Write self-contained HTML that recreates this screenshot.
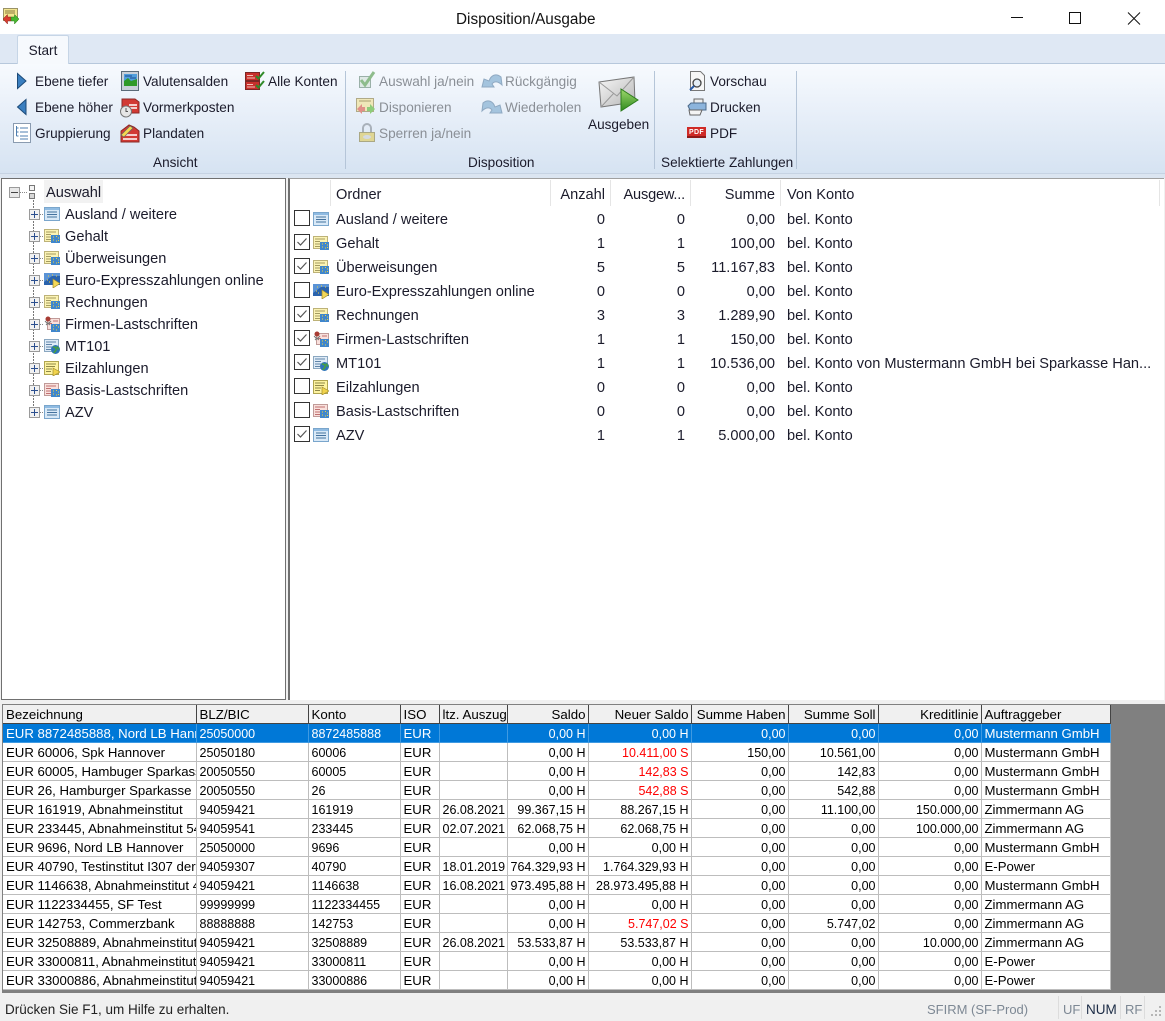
<!DOCTYPE html>
<html lang="de"><head><meta charset="utf-8"><title>Disposition/Ausgabe</title>
<style>
html,body{margin:0;padding:0;background:#fff}
#w{position:relative;width:1165px;height:1021px;overflow:hidden;background:#f0f0f0;font:13.6px "Liberation Sans",sans-serif;color:#1b1b2b}
.a{position:absolute;white-space:nowrap}
.t{position:absolute;white-space:nowrap;line-height:18px;height:18px;margin-top:1px}
.d{color:#8a8f96}
svg.i{position:absolute;overflow:visible}
.r{text-align:right}
.big{font-size:14.6px}
table{position:absolute;left:3px;top:705px;width:1107px;border-collapse:collapse;table-layout:fixed;font:13.2px "Liberation Sans",sans-serif;color:#000;background:#fff}
td,th{height:16px;padding:2px 2px 0 3px;border-right:1px solid #bdbdbd;border-bottom:1px solid #bdbdbd;overflow:hidden;white-space:nowrap;line-height:16px;font-weight:normal;box-sizing:content-box}
td:nth-child(2),td:nth-child(3),td.n,td.c{font-size:12.5px}
th{background:#f0f0f0;border-right:1px solid #444;border-bottom:1px solid #444;text-align:left;font-size:13.3px}
th.n,td.n{text-align:right}
tr.s td{background:#0078d7;color:#fff;border-color:#3f9ae2}
.red{color:#f00}
</style></head><body><div id="w">
<svg width="0" height="0" style="position:absolute"><defs>
<symbol id="blue" viewBox="0 0 16 16"><rect x=".5" y="1.500" width="15" height="13" fill="#d9e9f7" stroke="#7aa6cc"/><rect x="1" y="2" width="14" height="2" fill="#8fbbe2"/><path d="M3 6h10M3 8.500h10M3 11h10" stroke="#44729e"/></symbol>
<symbol id="yel" viewBox="0 0 16 16"><rect x=".5" y="1.500" width="14" height="12" fill="#fbf3b4" stroke="#bdb278"/><path d="M2 4h10M2 6.500h5M2 9h5M2 11.500h5" stroke="#a49b60"/><rect x="7" y="7" width="9" height="8" fill="#3f86cc"/><path d="M9 9h1M12 8.500h1M14 10h1M9 12h1M12 13h1M14 12.500h1" stroke="#f2d23c"/></symbol>
<symbol id="pink" viewBox="0 0 16 16"><rect x=".5" y="1.500" width="14" height="12" fill="#f9e0dc" stroke="#c09a98"/><path d="M2 4h10M2 6.500h5M2 9h5M2 11.500h5" stroke="#c07070"/><rect x="7" y="7" width="9" height="8" fill="#3f86cc"/><path d="M9 9h1M12 8.500h1M14 10h1M9 12h1M12 13h1M14 12.500h1" stroke="#f2d23c"/></symbol>
<symbol id="firm" viewBox="0 0 16 16"><rect x="3.500" y="2.500" width="12" height="11" fill="#f9e0dc" stroke="#c09a98"/><path d="M9 5h5M4 7.500h4" stroke="#c07070"/><circle cx="4" cy="3" r="2.500" fill="#a83c34"/><path d="M1 5l3 3 3-3M2 9l2-2 2 2" stroke="#777" fill="none"/><rect x="7" y="8" width="9" height="8" fill="#3f86cc"/><path d="M9 10h1M12 9.500h1M14 11h1M9 13h1M12 14h1" stroke="#f2d23c"/></symbol>
<symbol id="euro" viewBox="0 0 16 16"><rect x="0" y="1" width="16" height="12" fill="#2a63ad"/><path d="M0 1h16v3H8L0 10z" fill="#5a93d6"/><path d="M4 4h1M8 3h1M12 4h1M3 8h1M5 10h1" stroke="#f2d23c"/><path d="M9 7l7 4.500-7 4.500z" fill="#f3d85a" stroke="#a28c2c" stroke-width=".7"/></symbol>
<symbol id="mt" viewBox="0 0 16 16"><rect x=".5" y="1.500" width="14" height="12" fill="#dfebf7" stroke="#8aa7c0"/><path d="M2 4h10M2 6.500h6M2 9h6M2 11.500h5" stroke="#5f84a8"/><circle cx="11.500" cy="11.500" r="4.500" fill="#2f75b8"/><path d="M9 9c2 0 4 1 3 3s-2 2-2 3M13 8.500l2 3" stroke="#46a23c" stroke-width="1.500" fill="none"/></symbol>
<symbol id="eil" viewBox="0 0 16 16"><rect x=".5" y="1.500" width="14" height="13" fill="#fdf3a0" stroke="#b0a550"/><path d="M2 4h10M2 6.500h9M2 9h6M2 11.500h5" stroke="#8f8848"/><path d="M9 8l7 4-7 4z" fill="#f1d34c" stroke="#a28c2c" stroke-width=".7"/></symbol>
<symbol id="plus" viewBox="0 0 11 11"><rect x=".5" y=".5" width="10" height="10" fill="#f1f1f1" stroke="#9a9a9a"/><path d="M2 5.500h7M5.500 2v7" stroke="#2b4f8f"/></symbol>
<symbol id="chk" viewBox="0 0 17 17"><rect x=".5" y=".5" width="15" height="15" fill="#fff" stroke="#333"/><path d="M3.500 8l3 3 6-6.500" fill="none" stroke="#555" stroke-width="1.200"/></symbol>
<symbol id="unc" viewBox="0 0 17 17"><rect x=".5" y=".5" width="15" height="15" fill="#fff" stroke="#333"/></symbol>
<linearGradient id="gg" x1="0" x2="0" y1="0" y2="1"><stop offset="0" stop-color="#9ed86c"/><stop offset="1" stop-color="#2f8a1e"/></linearGradient>
<linearGradient id="env" x1="0" x2="1" y1="0" y2="1"><stop offset="0" stop-color="#f7f7f7"/><stop offset="1" stop-color="#b5b5b5"/></linearGradient>
</defs></svg>

<!-- title bar -->
<div class="a" style="left:0;top:0;width:1165px;height:34px;background:#fff"></div>
<svg class="i" style="left:3px;top:8px" width="16" height="16" viewBox="0 0 16 16"><rect x=".5" y=".5" width="14" height="12" fill="#f3e690" stroke="#9a9266"/><path d="M2 3h10M2 5h10" stroke="#8a7a40"/><path d="M0 11l4.500-4.500V9H8v4H4.500v3z" fill="#d83c30" stroke="#8a2018" stroke-width=".5"/><path d="M16 11l-4.500-4.500V9H8v4h3.500v3z" fill="#48b830" stroke="#2a7a18" stroke-width=".5"/></svg>
<div class="a" style="left:456px;top:11px;line-height:18px;font-size:15.3px;color:#111">Disposition/Ausgabe</div>
<svg class="i" style="left:1000px;top:0" width="165" height="34" fill="none" stroke="#111"><path d="M11 17.500h12"/><rect x="69.500" y="12.500" width="11" height="11"/><path d="M128 12.500l12 12M140 12.500l-12 12"/></svg>

<!-- ribbon -->
<div class="a" style="left:0;top:34px;width:1165px;height:29px;background:#dfe8f4"></div>
<div class="a" style="left:0;top:63px;width:1165px;height:1px;background:#b7c8dc"></div>
<div class="a" style="left:0;top:64px;width:1165px;height:109px;background:linear-gradient(#f7fafe,#e6eef8 50%,#d6e3f2)"></div>
<div class="a" style="left:0;top:173px;width:1165px;height:5px;background:#dbe5f1;border-top:1px solid #c6d3e3;box-sizing:border-box"></div>
<div class="a" style="left:17px;top:35px;width:52px;height:29px;background:#f6f9fd;border:1px solid #c6d5e6;border-bottom:0;border-radius:2px 2px 0 0;box-sizing:border-box;text-align:center;line-height:29px;font-size:13.6px;color:#1b1b2b">Start</div>
<div class="a" style="left:345px;top:71px;width:1px;height:98px;background:#b5c5d8"></div>
<div class="a" style="left:654px;top:71px;width:1px;height:98px;background:#b5c5d8"></div>
<div class="a" style="left:796px;top:71px;width:1px;height:98px;background:#b5c5d8"></div>

<svg class="i" style="left:16px;top:72px" width="12" height="18" viewBox="0 0 12 18"><path d="M1.500 1.500L10 9 1.500 16.500z" fill="#3a7fc0" stroke="#1c4a78"/></svg>
<svg class="i" style="left:16px;top:98px" width="12" height="18" viewBox="0 0 12 18"><path d="M10 1.500L1.500 9 10 16.500z" fill="#3a7fc0" stroke="#1c4a78"/></svg>
<svg class="i" style="left:13px;top:123px" width="18" height="20" viewBox="0 0 18 20"><rect x=".5" y=".5" width="17" height="19" fill="#fff" stroke="#8a9bb0"/><path d="M3.500 3v10M3.500 5h2M3.500 9h2M3.500 13h2M7 5h8M7 9h8M7 13h8M7 16h8" stroke="#4f7fb0"/></svg>
<div class="t" style="left:35px;top:72px">Ebene tiefer</div>
<div class="t" style="left:35px;top:98px">Ebene höher</div>
<div class="t" style="left:35px;top:124px">Gruppierung</div>

<svg class="i" style="left:121px;top:71px" width="19" height="20" viewBox="0 0 19 20"><rect x=".5" y=".5" width="17" height="19" fill="#c8d0d8" stroke="#5a6a78"/><rect x="3" y="3" width="13" height="12" fill="#4f9edc"/><path d="M3 10l4-3 3 3 6-2v7H3z" fill="#2f9a28"/><path d="M4 5h7M9 7h6" stroke="#1c4a90"/></svg>
<svg class="i" style="left:120px;top:98px" width="20" height="20" viewBox="0 0 20 20"><path d="M2 1h13l4 3v11H2z" fill="#d23a34" stroke="#8a2a28"/><path d="M9 7h8M9 10h8" stroke="#fff" stroke-width="1.500"/><circle cx="6" cy="13.500" r="5.500" fill="#e6e6e6" stroke="#777"/><path d="M6 10v3.500h2" stroke="#555" fill="none"/></svg>
<svg class="i" style="left:120px;top:124px" width="20" height="19" viewBox="0 0 20 19"><path d="M1 18V7l8-6 5 2 5 4v11z" fill="#d23a34" stroke="#8a2a28"/><path d="M3 11h14M3 15h14" stroke="#fff" stroke-width="1.500"/><path d="M1 11l9-9 3 2-9 9z" fill="#f4d850" stroke="#666" stroke-width=".7"/></svg>
<div class="t" style="left:143px;top:72px">Valutensalden</div>
<div class="t" style="left:143px;top:98px">Vormerkposten</div>
<div class="t" style="left:143px;top:124px">Plandaten</div>

<svg class="i" style="left:245px;top:71px" width="20" height="20" viewBox="0 0 20 20"><rect x=".5" y="1.500" width="14" height="8" fill="#c8302c" stroke="#7c2624"/><rect x=".5" y="10.500" width="14" height="8" fill="#c8302c" stroke="#7c2624"/><path d="M2 4.500h6M2 7h8M2 13.500h6M2 16h8" stroke="#f2c0b8"/><path d="M11 5l2.500 2.500L19 1M11 14l2.500 2.500L19 10" stroke="#2f8a28" stroke-width="2" fill="none"/></svg>
<div class="t" style="left:268px;top:72px">Alle Konten</div>
<div class="t" style="left:153px;top:153px">Ansicht</div>

<svg class="i" style="left:358px;top:71px" width="18" height="18" viewBox="0 0 18 18"><rect x="1.500" y="5.500" width="11" height="11" fill="#dfe9e6" stroke="#9ab0a8"/><path d="M3 9l4 5 9-13" stroke="#8ebc8c" stroke-width="3" fill="none"/></svg>
<svg class="i" style="left:356px;top:98px" width="20" height="18" viewBox="0 0 20 18"><rect x=".5" y=".5" width="17" height="13" fill="#efe7b8" stroke="#b0aa88"/><path d="M3 3h12" stroke="#a89f70"/><path d="M1 11l5-5v3h3v4H6v3z" fill="#e09088"/><path d="M19 11l-5-5v3h-3v4h3v3z" fill="#8ecc7a"/></svg>
<svg class="i" style="left:358px;top:123px" width="18" height="20" viewBox="0 0 18 20"><path d="M5 9V5a4 4 0 0 1 8 0v4" fill="none" stroke="#a9b1ba" stroke-width="2"/><rect x="1.500" y="9.500" width="15" height="9" fill="#dfd694" stroke="#aaa884"/><ellipse cx="9" cy="14" rx="4" ry="2" fill="#d5dbe2"/></svg>
<div class="t d" style="left:379px;top:72px">Auswahl ja/nein</div>
<div class="t d" style="left:379px;top:98px">Disponieren</div>
<div class="t d" style="left:379px;top:124px">Sperren ja/nein</div>
<svg class="i" style="left:481px;top:72px" width="22" height="16" viewBox="0 0 22 16"><path d="M1 15L3 7l5 2C10 3 15 1 20 5l1 8C17 9 13 9 11 12l2 3z" fill="#a4c4de" stroke="#8fa9c2"/></svg>
<svg class="i" style="left:481px;top:98px" width="22" height="16" viewBox="0 0 22 16"><path d="M21 15L19 7l-5 2C12 3 7 1 2 5l-1 8C5 9 9 9 11 12l-2 3z" fill="#a4c4de" stroke="#8fa9c2"/></svg>
<div class="t d" style="left:505px;top:72px">Rückgängig</div>
<div class="t d" style="left:505px;top:98px">Wiederholen</div>
<svg class="i" style="left:598px;top:76px" width="42" height="36" viewBox="0 0 42 36"><path d="M1 6l35-5 1 25-34 5z" fill="url(#env)" stroke="#777"/><path d="M1 6l18 14 17-19M3 31l13-14M37 26L22 16" fill="none" stroke="#999"/><path d="M23 13l17 11-17 11z" fill="url(#gg)" stroke="#2c7d1c"/></svg>
<div class="t" style="left:588px;top:115px">Ausgeben</div>
<div class="t" style="left:468px;top:153px">Disposition</div>

<svg class="i" style="left:688px;top:71px" width="18" height="21" viewBox="0 0 18 21"><path d="M2.500 .5h10l4 4v15h-14z" fill="#f7f7f7" stroke="#777"/><circle cx="9" cy="12" r="4" fill="#e4eef6" stroke="#444" stroke-width="1.300"/><path d="M6 15l-4 4" stroke="#2a5ca8" stroke-width="2"/></svg>
<svg class="i" style="left:687px;top:98px" width="20" height="18" viewBox="0 0 20 18"><path d="M7 1h9v5H7z" fill="#eee" stroke="#666"/><path d="M1 8l3-3h15v7H3z" fill="#8cb4dc" stroke="#4c6a8a"/><path d="M2 12h13l-2 5H3z" fill="#f4f4f4" stroke="#666"/></svg>
<svg class="i" style="left:687px;top:127px" width="19" height="11" viewBox="0 0 19 11"><rect width="19" height="11" fill="#cf2a26"/><rect x="0" y="9" width="19" height="2" fill="#8f1a18"/></svg>
<div class="a" style="left:689px;top:128px;font:bold 7px/9px 'Liberation Sans',sans-serif;color:#fff;letter-spacing:.3px">PDF</div>
<div class="t" style="left:710px;top:72px">Vorschau</div>
<div class="t" style="left:710px;top:98px">Drucken</div>
<div class="t" style="left:710px;top:124px">PDF</div>
<div class="t" style="left:661px;top:153px">Selektierte Zahlungen</div>

<!-- tree panel -->
<div class="big">
<div class="a" style="left:1px;top:178px;width:285px;height:522px;background:#fff;border:1px solid #707070;box-sizing:border-box"></div>
<svg class="i" style="left:0;top:0" width="60" height="430" fill="none"><path d="M33.500 200v212" stroke="#777" stroke-dasharray="2 1"/><path d="M40 214.500h4M40 236.500h4M40 258.500h4M40 280.500h4M40 302.500h4M40 324.500h4M40 346.500h4M40 368.500h4M40 390.500h4M40 412.500h4M20 192.500h8" stroke="#888" stroke-dasharray="1 1"/></svg>
<svg class="i" style="left:9px;top:187px" width="11" height="11" viewBox="0 0 11 11"><rect x=".5" y=".5" width="10" height="10" fill="#e8e8e8" stroke="#9a9a9a"/><path d="M2 5.500h7" stroke="#444"/></svg>
<svg class="i" style="left:29px;top:185px" width="7" height="15"><rect x=".5" y=".5" width="5" height="5" fill="#f4f4f4" stroke="#777"/><rect x=".5" y="8.500" width="5" height="5" fill="#d8d8d8" stroke="#777"/></svg>
<div class="a" style="left:44px;top:180px;width:59px;height:23px;background:#f2f2f2"></div>
<div class="t" style="left:46px;top:183px">Auswahl</div>

<svg class="i" style="left:29px;top:209px" width="11" height="11"><use href="#plus"/></svg><svg class="i" style="left:44px;top:206px" width="16" height="16"><use href="#blue"/></svg><div class="t" style="left:65px;top:205px">Ausland / weitere</div>
<svg class="i" style="left:29px;top:231px" width="11" height="11"><use href="#plus"/></svg><svg class="i" style="left:44px;top:228px" width="16" height="16"><use href="#yel"/></svg><div class="t" style="left:65px;top:227px">Gehalt</div>
<svg class="i" style="left:29px;top:253px" width="11" height="11"><use href="#plus"/></svg><svg class="i" style="left:44px;top:250px" width="16" height="16"><use href="#yel"/></svg><div class="t" style="left:65px;top:249px">Überweisungen</div>
<svg class="i" style="left:29px;top:275px" width="11" height="11"><use href="#plus"/></svg><svg class="i" style="left:44px;top:272px" width="16" height="16"><use href="#euro"/></svg><div class="t" style="left:65px;top:271px">Euro-Expresszahlungen online</div>
<svg class="i" style="left:29px;top:297px" width="11" height="11"><use href="#plus"/></svg><svg class="i" style="left:44px;top:294px" width="16" height="16"><use href="#yel"/></svg><div class="t" style="left:65px;top:293px">Rechnungen</div>
<svg class="i" style="left:29px;top:319px" width="11" height="11"><use href="#plus"/></svg><svg class="i" style="left:44px;top:316px" width="16" height="16"><use href="#firm"/></svg><div class="t" style="left:65px;top:315px">Firmen-Lastschriften</div>
<svg class="i" style="left:29px;top:341px" width="11" height="11"><use href="#plus"/></svg><svg class="i" style="left:44px;top:338px" width="16" height="16"><use href="#mt"/></svg><div class="t" style="left:65px;top:337px">MT101</div>
<svg class="i" style="left:29px;top:363px" width="11" height="11"><use href="#plus"/></svg><svg class="i" style="left:44px;top:360px" width="16" height="16"><use href="#eil"/></svg><div class="t" style="left:65px;top:359px">Eilzahlungen</div>
<svg class="i" style="left:29px;top:385px" width="11" height="11"><use href="#plus"/></svg><svg class="i" style="left:44px;top:382px" width="16" height="16"><use href="#pink"/></svg><div class="t" style="left:65px;top:381px">Basis-Lastschriften</div>
<svg class="i" style="left:29px;top:407px" width="11" height="11"><use href="#plus"/></svg><svg class="i" style="left:44px;top:404px" width="16" height="16"><use href="#blue"/></svg><div class="t" style="left:65px;top:403px">AZV</div>

<!-- list panel -->
<div class="a" style="left:288px;top:178px;width:876px;height:522px;background:#fff;border-left:2px solid #707070;border-top:1px solid #a0a0a0;box-sizing:border-box"></div>
<div class="a" style="left:330px;top:180px;width:1px;height:26px;background:#e5e5e5"></div>
<div class="a" style="left:550px;top:180px;width:1px;height:26px;background:#e5e5e5"></div>
<div class="a" style="left:610px;top:180px;width:1px;height:26px;background:#e5e5e5"></div>
<div class="a" style="left:690px;top:180px;width:1px;height:26px;background:#e5e5e5"></div>
<div class="a" style="left:780px;top:180px;width:1px;height:26px;background:#e5e5e5"></div>
<div class="a" style="left:1159px;top:180px;width:1px;height:26px;background:#e5e5e5"></div>
<div class="t" style="left:336px;top:185px">Ordner</div>
<div class="t r" style="left:540px;width:65px;top:185px">Anzahl</div>
<div class="t r" style="left:610px;width:75px;top:185px;letter-spacing:-.2px">Ausgew...</div>
<div class="t r" style="left:700px;width:75px;top:185px">Summe</div>
<div class="t" style="left:787px;top:185px">Von Konto</div>

<svg class="i" style="left:294px;top:210px" width="17" height="17"><use href="#unc"/></svg><svg class="i" style="left:313px;top:211px" width="16" height="16"><use href="#blue"/></svg><div class="t" style="left:336px;top:210px">Ausland / weitere</div><div class="t r" style="left:545px;width:60px;top:210px">0</div><div class="t r" style="left:625px;width:60px;top:210px">0</div><div class="t r" style="left:695px;width:80px;top:210px">0,00</div><div class="t" style="left:787px;top:210px">bel. Konto</div>
<svg class="i" style="left:294px;top:234px" width="17" height="17"><use href="#chk"/></svg><svg class="i" style="left:313px;top:235px" width="16" height="16"><use href="#yel"/></svg><div class="t" style="left:336px;top:234px">Gehalt</div><div class="t r" style="left:545px;width:60px;top:234px">1</div><div class="t r" style="left:625px;width:60px;top:234px">1</div><div class="t r" style="left:695px;width:80px;top:234px">100,00</div><div class="t" style="left:787px;top:234px">bel. Konto</div>
<svg class="i" style="left:294px;top:258px" width="17" height="17"><use href="#chk"/></svg><svg class="i" style="left:313px;top:259px" width="16" height="16"><use href="#yel"/></svg><div class="t" style="left:336px;top:258px">Überweisungen</div><div class="t r" style="left:545px;width:60px;top:258px">5</div><div class="t r" style="left:625px;width:60px;top:258px">5</div><div class="t r" style="left:695px;width:80px;top:258px">11.167,83</div><div class="t" style="left:787px;top:258px">bel. Konto</div>
<svg class="i" style="left:294px;top:282px" width="17" height="17"><use href="#unc"/></svg><svg class="i" style="left:313px;top:283px" width="16" height="16"><use href="#euro"/></svg><div class="t" style="left:336px;top:282px">Euro-Expresszahlungen online</div><div class="t r" style="left:545px;width:60px;top:282px">0</div><div class="t r" style="left:625px;width:60px;top:282px">0</div><div class="t r" style="left:695px;width:80px;top:282px">0,00</div><div class="t" style="left:787px;top:282px">bel. Konto</div>
<svg class="i" style="left:294px;top:306px" width="17" height="17"><use href="#chk"/></svg><svg class="i" style="left:313px;top:307px" width="16" height="16"><use href="#yel"/></svg><div class="t" style="left:336px;top:306px">Rechnungen</div><div class="t r" style="left:545px;width:60px;top:306px">3</div><div class="t r" style="left:625px;width:60px;top:306px">3</div><div class="t r" style="left:695px;width:80px;top:306px">1.289,90</div><div class="t" style="left:787px;top:306px">bel. Konto</div>
<svg class="i" style="left:294px;top:330px" width="17" height="17"><use href="#chk"/></svg><svg class="i" style="left:313px;top:331px" width="16" height="16"><use href="#firm"/></svg><div class="t" style="left:336px;top:330px">Firmen-Lastschriften</div><div class="t r" style="left:545px;width:60px;top:330px">1</div><div class="t r" style="left:625px;width:60px;top:330px">1</div><div class="t r" style="left:695px;width:80px;top:330px">150,00</div><div class="t" style="left:787px;top:330px">bel. Konto</div>
<svg class="i" style="left:294px;top:354px" width="17" height="17"><use href="#chk"/></svg><svg class="i" style="left:313px;top:355px" width="16" height="16"><use href="#mt"/></svg><div class="t" style="left:336px;top:354px">MT101</div><div class="t r" style="left:545px;width:60px;top:354px">1</div><div class="t r" style="left:625px;width:60px;top:354px">1</div><div class="t r" style="left:695px;width:80px;top:354px">10.536,00</div><div class="t" style="left:787px;top:354px">bel. Konto von Mustermann GmbH bei Sparkasse Han...</div>
<svg class="i" style="left:294px;top:378px" width="17" height="17"><use href="#unc"/></svg><svg class="i" style="left:313px;top:379px" width="16" height="16"><use href="#eil"/></svg><div class="t" style="left:336px;top:378px">Eilzahlungen</div><div class="t r" style="left:545px;width:60px;top:378px">0</div><div class="t r" style="left:625px;width:60px;top:378px">0</div><div class="t r" style="left:695px;width:80px;top:378px">0,00</div><div class="t" style="left:787px;top:378px">bel. Konto</div>
<svg class="i" style="left:294px;top:402px" width="17" height="17"><use href="#unc"/></svg><svg class="i" style="left:313px;top:403px" width="16" height="16"><use href="#pink"/></svg><div class="t" style="left:336px;top:402px">Basis-Lastschriften</div><div class="t r" style="left:545px;width:60px;top:402px">0</div><div class="t r" style="left:625px;width:60px;top:402px">0</div><div class="t r" style="left:695px;width:80px;top:402px">0,00</div><div class="t" style="left:787px;top:402px">bel. Konto</div>
<svg class="i" style="left:294px;top:426px" width="17" height="17"><use href="#chk"/></svg><svg class="i" style="left:313px;top:427px" width="16" height="16"><use href="#blue"/></svg><div class="t" style="left:336px;top:426px">AZV</div><div class="t r" style="left:545px;width:60px;top:426px">1</div><div class="t r" style="left:625px;width:60px;top:426px">1</div><div class="t r" style="left:695px;width:80px;top:426px">5.000,00</div><div class="t" style="left:787px;top:426px">bel. Konto</div>
</div>

<!-- grid -->
<div class="a" style="left:2px;top:704px;width:1163px;height:289px;background:#808080"></div>
<table>
<colgroup><col style="width:193px"><col style="width:112px"><col style="width:92px"><col style="width:39px"><col style="width:68px"><col style="width:81px"><col style="width:103px"><col style="width:97px"><col style="width:90px"><col style="width:103px"><col style="width:129px"></colgroup>
<tr><th>Bezeichnung</th><th>BLZ/BIC</th><th>Konto</th><th>ISO</th><th>ltz. Auszug</th><th class="n">Saldo</th><th class="n">Neuer Saldo</th><th class="n">Summe Haben</th><th class="n">Summe Soll</th><th class="n">Kreditlinie</th><th>Auftraggeber</th></tr>
<tr class="s"><td>EUR 8872485888, Nord LB Hannover</td><td>25050000</td><td>8872485888</td><td>EUR</td><td class="c"></td><td class="n">0,00 H</td><td class="n">0,00 H</td><td class="n">0,00</td><td class="n">0,00</td><td class="n">0,00</td><td>Mustermann GmbH</td></tr>
<tr><td>EUR 60006, Spk Hannover</td><td>25050180</td><td>60006</td><td>EUR</td><td class="c"></td><td class="n">0,00 H</td><td class="n red">10.411,00 S</td><td class="n">150,00</td><td class="n">10.561,00</td><td class="n">0,00</td><td>Mustermann GmbH</td></tr>
<tr><td>EUR 60005, Hambuger Sparkasse</td><td>20050550</td><td>60005</td><td>EUR</td><td class="c"></td><td class="n">0,00 H</td><td class="n red">142,83 S</td><td class="n">0,00</td><td class="n">142,83</td><td class="n">0,00</td><td>Mustermann GmbH</td></tr>
<tr><td>EUR 26, Hamburger Sparkasse</td><td>20050550</td><td>26</td><td>EUR</td><td class="c"></td><td class="n">0,00 H</td><td class="n red">542,88 S</td><td class="n">0,00</td><td class="n">542,88</td><td class="n">0,00</td><td>Mustermann GmbH</td></tr>
<tr><td>EUR 161919, Abnahmeinstitut</td><td>94059421</td><td>161919</td><td>EUR</td><td class="c">26.08.2021</td><td class="n">99.367,15 H</td><td class="n">88.267,15 H</td><td class="n">0,00</td><td class="n">11.100,00</td><td class="n">150.000,00</td><td>Zimmermann AG</td></tr>
<tr><td>EUR 233445, Abnahmeinstitut 54</td><td>94059541</td><td>233445</td><td>EUR</td><td class="c">02.07.2021</td><td class="n">62.068,75 H</td><td class="n">62.068,75 H</td><td class="n">0,00</td><td class="n">0,00</td><td class="n">100.000,00</td><td>Zimmermann AG</td></tr>
<tr><td>EUR 9696, Nord LB Hannover</td><td>25050000</td><td>9696</td><td>EUR</td><td class="c"></td><td class="n">0,00 H</td><td class="n">0,00 H</td><td class="n">0,00</td><td class="n">0,00</td><td class="n">0,00</td><td>Mustermann GmbH</td></tr>
<tr><td>EUR 40790, Testinstitut I307 der</td><td>94059307</td><td>40790</td><td>EUR</td><td class="c">18.01.2019</td><td class="n">764.329,93 H</td><td class="n">1.764.329,93 H</td><td class="n">0,00</td><td class="n">0,00</td><td class="n">0,00</td><td>E-Power</td></tr>
<tr><td>EUR 1146638, Abnahmeinstitut 4</td><td>94059421</td><td>1146638</td><td>EUR</td><td class="c">16.08.2021</td><td class="n">973.495,88 H</td><td class="n">28.973.495,88 H</td><td class="n">0,00</td><td class="n">0,00</td><td class="n">0,00</td><td>Mustermann GmbH</td></tr>
<tr><td>EUR 1122334455, SF Test</td><td>99999999</td><td>1122334455</td><td>EUR</td><td class="c"></td><td class="n">0,00 H</td><td class="n">0,00 H</td><td class="n">0,00</td><td class="n">0,00</td><td class="n">0,00</td><td>Zimmermann AG</td></tr>
<tr><td>EUR 142753, Commerzbank</td><td>88888888</td><td>142753</td><td>EUR</td><td class="c"></td><td class="n">0,00 H</td><td class="n red">5.747,02 S</td><td class="n">0,00</td><td class="n">5.747,02</td><td class="n">0,00</td><td>Zimmermann AG</td></tr>
<tr><td>EUR 32508889, Abnahmeinstitut</td><td>94059421</td><td>32508889</td><td>EUR</td><td class="c">26.08.2021</td><td class="n">53.533,87 H</td><td class="n">53.533,87 H</td><td class="n">0,00</td><td class="n">0,00</td><td class="n">10.000,00</td><td>Zimmermann AG</td></tr>
<tr><td>EUR 33000811, Abnahmeinstitut</td><td>94059421</td><td>33000811</td><td>EUR</td><td class="c"></td><td class="n">0,00 H</td><td class="n">0,00 H</td><td class="n">0,00</td><td class="n">0,00</td><td class="n">0,00</td><td>E-Power</td></tr>
<tr><td>EUR 33000886, Abnahmeinstitut</td><td>94059421</td><td>33000886</td><td>EUR</td><td class="c"></td><td class="n">0,00 H</td><td class="n">0,00 H</td><td class="n">0,00</td><td class="n">0,00</td><td class="n">0,00</td><td>E-Power</td></tr>
</table>

<!-- status bar -->
<div class="t" style="left:5px;top:1000px;font-size:13.5px;color:#222">Drücken Sie F1, um Hilfe zu erhalten.</div>
<div class="t" style="left:927px;top:1000px;font-size:13px;color:#7d8894">SFIRM (SF-Prod)</div>
<div class="a" style="left:1058px;top:996px;width:1px;height:23px;background:#dcdcdc"></div>
<div class="a" style="left:1081px;top:996px;width:1px;height:23px;background:#dcdcdc"></div>
<div class="a" style="left:1120px;top:996px;width:1px;height:23px;background:#dcdcdc"></div>
<div class="a" style="left:1144px;top:996px;width:1px;height:23px;background:#dcdcdc"></div>
<div class="t" style="left:1063px;top:1000px;font-size:13px;color:#7d8894">UF</div>
<div class="t" style="left:1086px;top:1000px;font-size:13.5px;color:#1b2b45">NUM</div>
<div class="t" style="left:1125px;top:1000px;font-size:13px;color:#7d8894">RF</div>
<svg class="i" style="left:1150px;top:1005px" width="14" height="14" fill="#b5b5b5"><rect x="9" y="1" width="2" height="2"/><rect x="5" y="5" width="2" height="2"/><rect x="9" y="5" width="2" height="2"/><rect x="1" y="9" width="2" height="2"/><rect x="5" y="9" width="2" height="2"/><rect x="9" y="9" width="2" height="2"/></svg>
</div></body></html>
